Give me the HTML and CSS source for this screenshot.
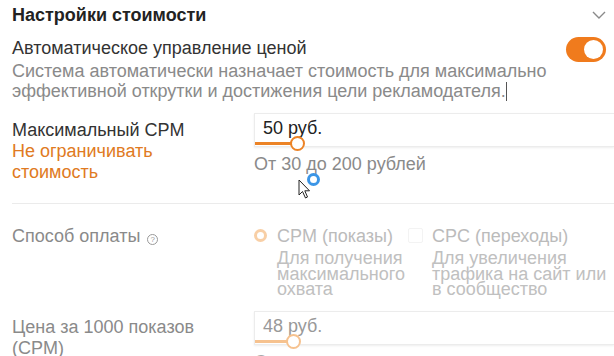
FILE: index.html
```html
<!DOCTYPE html>
<html lang="ru">
<head>
  <meta charset="UTF-8">
  <title>Настройки стоимости</title>
  <link rel="stylesheet" href="styles.css">
</head>
<body>

<div class="panel">

  <!-- Section header -->
  <div class="panel-head">
    <h2>Настройки стоимости</h2>
    <svg class="chevron" width="14" height="8" viewBox="0 0 14 8">
      <path d="M1 1 L7 7 L13 1" fill="none" stroke="#8a8a8a" stroke-width="1.4"/>
    </svg>
  </div>

  <!-- Auto price -->
  <div class="auto-row">
    <div class="auto-text">
      <div class="auto-title">Автоматическое управление ценой</div>
      <div class="auto-desc">Система автоматически назначает стоимость для максимально<br>эффективной открутки и достижения цели рекламодателя.<span class="caret"></span></div>
    </div>
    <div class="toggle"><span class="knob"></span></div>
  </div>

  <!-- Max CPM -->
  <div class="field-row max-row">
    <div class="field-label">
      <div>Максимальный CPM</div>
      <a class="link" href="#">Не ограничивать стоимость</a>
    </div>
    <div class="field-control">
      <div class="price-input">
        <span>50 руб.</span>
        <div class="slider">
          <div class="slider-fill" style="width: 42px"></div>
          <div class="slider-knob" style="left: 42px"></div>
        </div>
      </div>
      <div class="hint">От 30 до 200 рублей</div>
      <span class="click-ring"></span>
      <svg class="pointer" width="14" height="20" viewBox="0 0 14 20">
        <path d="M1 1 L1 16 L4.5 12.5 L7.5 19 L9.5 18 L6.8 11.8 L11.5 11.8 Z" fill="#fff" stroke="#222" stroke-width="1"/>
      </svg>
    </div>
  </div>

  <div class="divider"></div>

  <!-- Payment method (disabled) -->
  <div class="field-row disabled pay-row">
    <div class="field-label">Способ оплаты <span class="help">?</span></div>
    <div class="field-control options">
      <div class="option">
        <span class="radio"></span>
        <div>
          <div class="option-title">CPM (показы)</div>
          <div class="option-desc">Для получения<br>максимального<br>охвата</div>
        </div>
      </div>
      <div class="option">
        <span class="checkbox"></span>
        <div>
          <div class="option-title">CPC (переходы)</div>
          <div class="option-desc">Для увеличения<br>трафика на сайт или<br>в сообщество</div>
        </div>
      </div>
    </div>
  </div>

  <!-- CPM price (disabled) -->
  <div class="field-row disabled price-row">
    <div class="field-label">Цена за 1000 показов<br>(CPM)</div>
    <div class="field-control">
      <div class="price-input">
        <span>48 руб.</span>
        <div class="slider">
          <div class="slider-fill" style="width: 38px"></div>
          <div class="slider-knob" style="left: 38px"></div>
        </div>
      </div>
      <div class="hint">Стоимость напрямую влияет на охват</div>
    </div>
  </div>

</div>

</body>
</html>
```

FILE: styles.css
```css
body {
  margin: 0;
  background: #fff;
  font-family: "Liberation Sans", Arial, sans-serif;
  font-size: 18px;
  color: #333;
  overflow: hidden;
  height: 356px;
}

.panel {
  padding: 0 0 0 12px;
}

/* Header */
.panel-head {
  display: flex;
  justify-content: space-between;
  align-items: center;
  height: 30px;
  padding-right: 8px;
}

.panel-head h2 {
  margin: 0;
  font-size: 18px;
  font-weight: bold;
  color: #222;
}

/* Auto price */
.auto-row {
  display: flex;
  justify-content: space-between;
  margin-top: 8px;
  padding-right: 8px;
}

.auto-title {
  line-height: 20px;
  margin-bottom: 3px;
  color: #333;
}

.auto-desc {
  line-height: 20px;
  color: #8a8a8a;
}

.caret {
  display: inline-block;
  width: 1px;
  height: 19px;
  background: #555;
  vertical-align: -4px;
}

.toggle {
  position: relative;
  width: 40px;
  height: 25px;
  border-radius: 13px;
  background: #f07b1d;
  margin-top: -1px;
  flex-shrink: 0;
}

.toggle .knob {
  position: absolute;
  right: 3px;
  top: 3px;
  width: 19px;
  height: 19px;
  border-radius: 50%;
  background: #fff;
}

/* Field rows */
.field-row {
  display: grid;
  grid-template-columns: 242px 1fr;
}

.max-row {
  margin-top: 12px;
}

.field-label {
  line-height: 21px;
  padding-top: 7px;
}

.link {
  display: block;
  width: 180px;
  color: #e07a22;
  text-decoration: none;
}

.field-control {
  position: relative;
}

.price-input {
  position: relative;
  height: 32px;
  border: 1px solid #ececec;
  border-right: none;
  box-shadow: 0 1px 2px #eee;
  padding-left: 8px;
  line-height: 28px;
  color: #222;
}

.slider {
  position: absolute;
  left: 0;
  right: 0;
  bottom: 1px;
  height: 3px;
}

.slider-fill {
  height: 3px;
  background: #ec8326;
}

.slider-knob {
  position: absolute;
  top: -6px;
  width: 11px;
  height: 11px;
  margin-left: -7px;
  border: 2px solid #ec8326;
  border-radius: 50%;
  background: #fff;
}

.hint {
  margin-top: 7px;
  line-height: 20px;
  color: #8a8a8a;
}

.click-ring {
  position: absolute;
  left: 53px;
  top: 60px;
  width: 7px;
  height: 7px;
  border: 3px solid #3b95e6;
  border-radius: 50%;
  background: #fff;
}

.pointer {
  position: absolute;
  left: 44px;
  top: 66px;
}

.divider {
  height: 1px;
  background: #ebebeb;
  margin-top: 20px;
}

/* Disabled rows */
.disabled .field-label {
  color: #8a8a8a;
}

.disabled .price-input {
  color: #999;
}

.disabled .slider-fill {
  background: #f6c28f;
}

.disabled .slider-knob {
  border-color: #f6c28f;
}

.help {
  display: inline-block;
  width: 9px;
  height: 9px;
  margin-left: 2px;
  border: 1px solid #999;
  border-radius: 50%;
  font-size: 8px;
  line-height: 9px;
  text-align: center;
  vertical-align: 0;
  color: #999;
}

.pay-row {
  margin-top: 22px;
}

.pay-row .field-label {
  padding-top: 0;
  line-height: 20px;
}

.options {
  display: flex;
  gap: 3px;
  white-space: nowrap;
}

.option {
  display: flex;
  gap: 10px;
}

.option + .option {
  gap: 9px;
}

.radio {
  width: 7px;
  height: 7px;
  margin-top: 3px;
  border: 3px solid #f8cfa6;
  border-radius: 50%;
  flex-shrink: 0;
}

.checkbox {
  width: 13px;
  height: 13px;
  margin-top: 2px;
  border: 1px solid #f3f3f3;
  border-radius: 2px;
  flex-shrink: 0;
}

.option-title {
  line-height: 20px;
  color: #bbb;
  margin-bottom: 5px;
}

.option-desc {
  line-height: 15.5px;
  color: #c0c0c0;
}

.price-row {
  margin-top: 13px;
}

.price-row .field-label {
  padding-top: 6px;
}

.price-row .hint {
  color: #aaa;
}
```
